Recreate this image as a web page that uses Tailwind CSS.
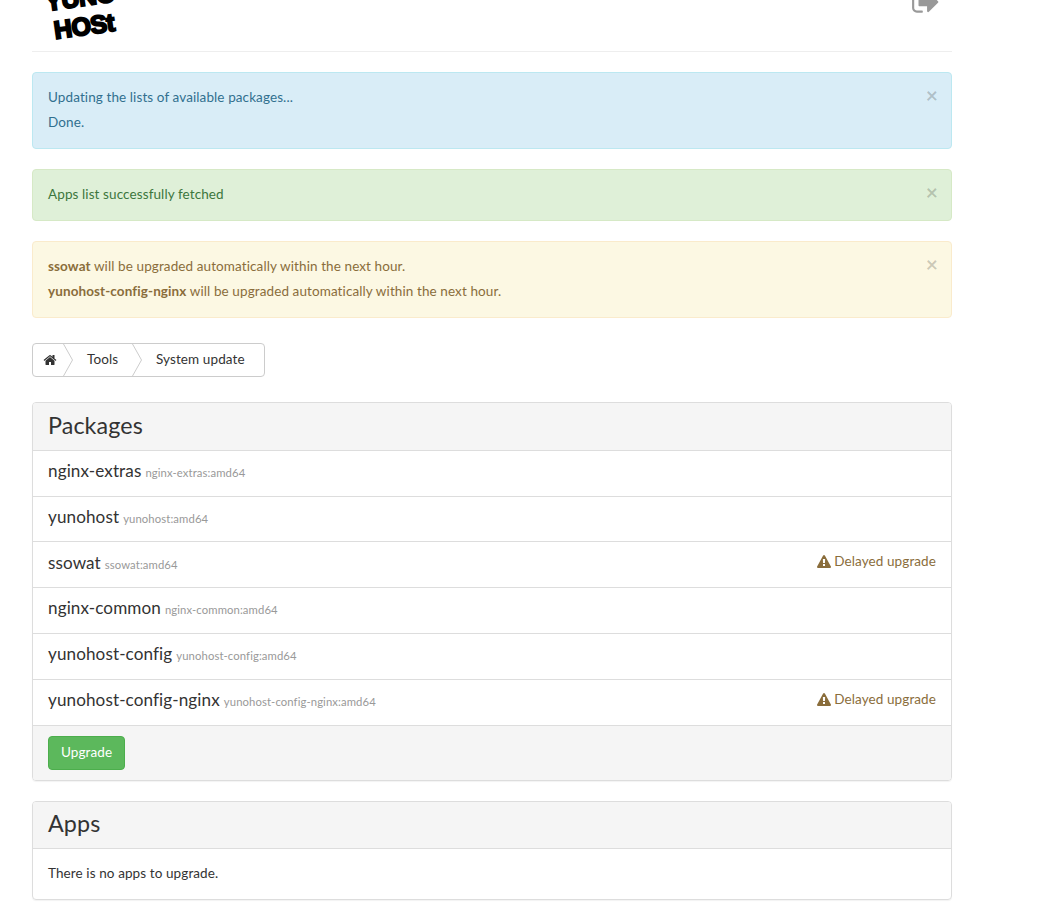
<!DOCTYPE html>
<html lang="en">
<head>
  <meta charset="UTF-8">
  <title>System update</title>
  <script src="https://cdn.jsdelivr.net/npm/@tailwindcss/browser@4"></script>
</head>
<body class="bg-white text-[#333] font-['Lato',sans-serif] text-[13.5px] tracking-[0.1px] leading-[25px] h-[920px] overflow-hidden">
  <div class="w-[920px] ml-[32px]">

    <!-- Header -->
    <div class="h-[52px] border-b border-[#eee] overflow-hidden flex justify-between items-end">
      <div class="ml-[16px] mb-[10px] w-[68px] flex flex-col items-center text-black font-bold font-['Liberation_Sans',sans-serif] text-[25px] leading-[29px] tracking-[-0.5px] -rotate-[8deg] [-webkit-text-stroke:2px_black]">
        <span>YUNO</span>
        <span>HOSt</span>
      </div>
      <svg class="w-[30px] h-[30px] mr-[11px] mb-[34px] shrink-0" viewBox="0 0 1792 1792" fill="#999"><path d="M704 1440q0 4 1 20t.5 26.5-3 23.5-10 19.5-20.5 6.5h-320q-119 0-203.5-84.5t-84.5-203.5v-704q0-119 84.5-203.5t203.5-84.5h320q13 0 22.5 9.5t9.5 22.5q0 4 1 20t.5 26.5-3 23.5-10 19.5-20.5 6.5h-320q-66 0-113 47t-47 113v704q0 66 47 113t113 47h312l11.5 1 11.5 3 8 5.5 7 9 2 13.5zm928-544q0 26-19 45l-544 544q-19 19-45 19t-45-19-19-45v-288h-448q-26 0-45-19t-19-45v-384q0-26 19-45t45-19h448v-288q0-26 19-45t45-19 45 19l544 544q19 19 19 45z"/></svg>
    </div>

    <!-- Alerts -->
    <div class="relative mt-[20px] border border-[#bce8f1] bg-[#d9edf7] text-[#31708f] rounded-[4px] px-[15px] pt-[12px] h-[77px]">
      <p>Updating the lists of available packages...</p>
      <p>Done.</p>
      <span class="absolute right-[13px] top-[9px] text-[21px] font-bold text-black/20">×</span>
    </div>
    <div class="relative mt-[20px] border border-[#d6e9c6] bg-[#dff0d8] text-[#3c763d] rounded-[4px] px-[15px] pt-[12px] h-[52px]">
      <p>Apps list successfully fetched</p>
      <span class="absolute right-[13px] top-[9px] text-[21px] font-bold text-black/20">×</span>
    </div>
    <div class="relative mt-[20px] border border-[#faebcc] bg-[#fcf8e3] text-[#8a6d3b] rounded-[4px] px-[15px] pt-[12px] h-[77px]">
      <p><strong>ssowat</strong> will be upgraded automatically within the next hour.</p>
      <p><strong>yunohost-config-nginx</strong> will be upgraded automatically within the next hour.</p>
      <span class="absolute right-[13px] top-[9px] text-[21px] font-bold text-black/20">×</span>
    </div>

    <!-- Breadcrumb -->
    <div class="mt-[25px] flex items-center w-[233px] h-[34px] border border-[#ccc] rounded-[4px] overflow-hidden">
      <a class="flex items-center pl-[10px] w-[30px] h-full">
        <svg class="w-[14px] h-[14px]" viewBox="0 0 1792 1792" fill="#333"><path d="M1472 992v480q0 26-19 45t-45 19h-384v-384h-256v384h-384q-26 0-45-19t-19-45v-480q0-1 .5-3t.5-3l575-474 575 474q1 2 1 6zm223-69l-62 74q-8 9-21 11h-3q-13 0-21-7l-692-577-692 577q-12 8-24 7-13-2-21-11l-62-74q-8-10-7-23.5t11-21.5l719-599q32-26 76-26t76 26l244 204v-195q0-14 9-23t23-9h192q14 0 23 9t9 23v408l219 182q10 8 11 21.5t-7 23.5z"/></svg>
      </a>
      <a class="relative flex items-center h-full w-[69px] pl-[24px] pb-[1px]">
        <svg class="absolute left-0 top-0 w-[11px] h-[32px]" viewBox="0 0 11 32" fill="none" stroke="#ccc"><path d="M0.5 0L9.5 16L0.5 32"/></svg>
        Tools
      </a>
      <a class="relative flex items-center h-full w-[132px] pl-[24px] pb-[1px]">
        <svg class="absolute left-0 top-0 w-[11px] h-[32px]" viewBox="0 0 11 32" fill="none" stroke="#ccc"><path d="M0.5 0L9.5 16L0.5 32"/></svg>
        System update
      </a>
    </div>

    <!-- Packages -->
    <div class="mt-[25px] border border-[#ddd] rounded-[4px] shadow-[0_1px_1px_rgba(0,0,0,0.05)] overflow-hidden">
      <h2 class="h-[48px] bg-[#f5f5f5] border-b border-[#ddd] px-[15px] pb-[3px] flex items-center text-[23.3px]">Packages</h2>
      <div class="h-[46px] border-b border-[#ddd] px-[15px] pb-[4px] flex items-center justify-between">
        <div class="flex items-baseline gap-[4px]"><span class="text-[17.1px]">nginx-extras</span><small class="text-[11.3px] text-[#999]">nginx-extras:amd64</small></div>
      </div>
      <div class="h-[45px] border-b border-[#ddd] px-[15px] pb-[3px] flex items-center justify-between">
        <div class="flex items-baseline gap-[4px]"><span class="text-[17.1px]">yunohost</span><small class="text-[11.3px] text-[#999]">yunohost:amd64</small></div>
      </div>
      <div class="h-[46px] border-b border-[#ddd] px-[15px] pb-[3px] flex items-center justify-between">
        <div class="flex items-baseline gap-[4px]"><span class="text-[17.1px]">ssowat</span><small class="text-[11.3px] text-[#999]">ssowat:amd64</small></div>
        <div class="flex items-center gap-[3px] text-[#8a6d3b] mb-[3px]">
          <svg class="w-[14px] h-[14px]" viewBox="0 0 1792 1792" fill="#8a6d3b"><path d="M1024 1375v-190q0-14-9.5-23.5t-22.5-9.5h-192q-13 0-22.5 9.5t-9.5 23.5v190q0 14 9.5 23.5t22.5 9.5h192q13 0 22.5-9.5t9.5-23.5zm-2-374l18-459q0-12-10-19-13-11-24-11h-220q-11 0-24 11-10 7-10 21l17 457q0 10 10 16.5t24 6.5h185q14 0 23.5-6.5t10.5-16.5zm-14-934l768 1408q35 63-2 126-17 29-46.5 46t-63.5 17h-1536q-34 0-63.5-17t-46.5-46q-37-63-2-126l768-1408q17-31 47-49t65-18 65 18 47 49z"/></svg>
          Delayed upgrade
        </div>
      </div>
      <div class="h-[46px] border-b border-[#ddd] px-[15px] pb-[4px] flex items-center justify-between">
        <div class="flex items-baseline gap-[4px]"><span class="text-[17.1px]">nginx-common</span><small class="text-[11.3px] text-[#999]">nginx-common:amd64</small></div>
      </div>
      <div class="h-[46px] border-b border-[#ddd] px-[15px] pb-[5px] flex items-center justify-between">
        <div class="flex items-baseline gap-[4px]"><span class="text-[17.1px]">yunohost-config</span><small class="text-[11.3px] text-[#999]">yunohost-config:amd64</small></div>
      </div>
      <div class="h-[46px] border-b border-[#ddd] px-[15px] pb-[5px] flex items-center justify-between">
        <div class="flex items-baseline gap-[4px]"><span class="text-[17.1px]">yunohost-config-nginx</span><small class="text-[11.3px] text-[#999]">yunohost-config-nginx:amd64</small></div>
        <div class="flex items-center gap-[3px] text-[#8a6d3b] mb-[1px]">
          <svg class="w-[14px] h-[14px]" viewBox="0 0 1792 1792" fill="#8a6d3b"><path d="M1024 1375v-190q0-14-9.5-23.5t-22.5-9.5h-192q-13 0-22.5 9.5t-9.5 23.5v190q0 14 9.5 23.5t22.5 9.5h192q13 0 22.5-9.5t9.5-23.5zm-2-374l18-459q0-12-10-19-13-11-24-11h-220q-11 0-24 11-10 7-10 21l17 457q0 10 10 16.5t24 6.5h185q14 0 23.5-6.5t10.5-16.5zm-14-934l768 1408q35 63-2 126-17 29-46.5 46t-63.5 17h-1536q-34 0-63.5-17t-46.5-46q-37-63-2-126l768-1408q17-31 47-49t65-18 65 18 47 49z"/></svg>
          Delayed upgrade
        </div>
      </div>
      <div class="h-[54px] bg-[#f5f5f5] px-[15px] flex items-center">
        <button class="h-[34px] w-[77px] bg-[#5cb85c] border border-[#4cae4c] rounded-[4px] text-white pb-[2px]">Upgrade</button>
      </div>
    </div>

    <!-- Apps -->
    <div class="mt-[20px] border border-[#ddd] rounded-[4px] shadow-[0_1px_1px_rgba(0,0,0,0.05)] overflow-hidden">
      <h2 class="h-[47px] bg-[#f5f5f5] border-b border-[#ddd] px-[15px] pb-[3px] flex items-center text-[23.3px]">Apps</h2>
      <div class="h-[50px] px-[15px] pb-[2px] flex items-center">There is no apps to upgrade.</div>
    </div>
  </div>
</body>
</html>
